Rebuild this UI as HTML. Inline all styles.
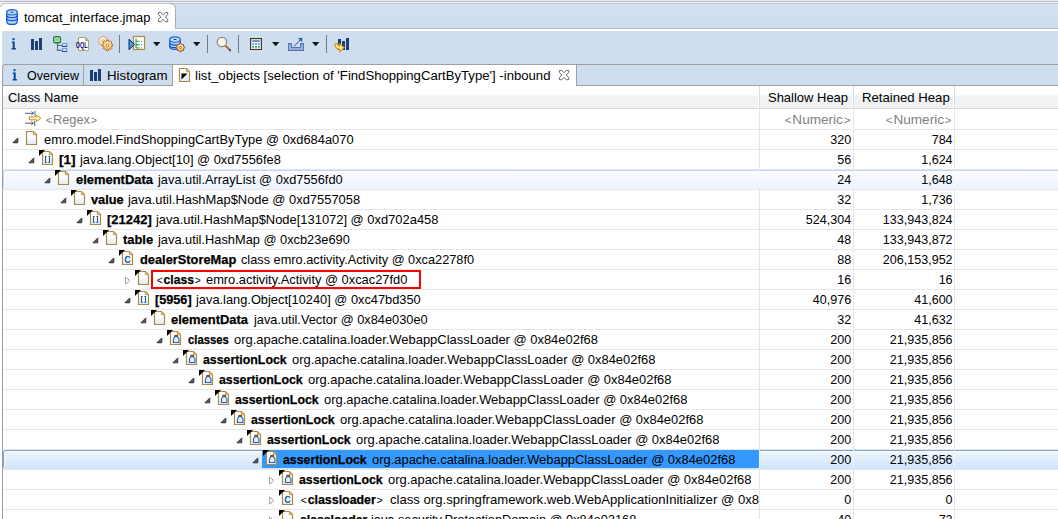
<!DOCTYPE html>
<html><head><meta charset="utf-8"><title>tomcat_interface.jmap</title>
<style>
html,body{margin:0;padding:0;background:#fff;}
body{width:1058px;height:519px;overflow:hidden;position:relative;font-family:"Liberation Sans","Noto Sans CJK SC",sans-serif;font-size:13px;color:#000;}
.abs,.ic,.t,.n{position:absolute;}
.ic{display:block;overflow:visible;}
.t{display:block;white-space:nowrap;line-height:20px;height:20px;transform-origin:0 50%;}
.t b{font-weight:bold;-webkit-text-stroke:0.25px #000;}
.n{white-space:nowrap;line-height:20px;height:20px;text-align:right;transform-origin:100% 50%;transform:scaleX(.965);}
.g{color:#808080;}
.ab{font-size:11px;padding:0 .8px;}
.hl{position:absolute;left:0;width:1058px;height:1px;background:#e6e6e6;}
.vl{position:absolute;top:110px;width:1px;height:409px;background:#e6e6e6;}
.sep{position:absolute;top:35px;width:1px;height:18px;background:#717b8b;}

</style></head><body>
<svg width="0" height="0" style="position:absolute"><defs><linearGradient id="gg" x1="0" y1="0" x2="0" y2="1"><stop offset="0" stop-color="#fff6b8"/><stop offset="1" stop-color="#f5bd55"/></linearGradient><linearGradient id="gp" x1="0" y1="0" x2="0" y2="1"><stop offset="0" stop-color="#fffbe0"/><stop offset="1" stop-color="#f8dca0"/></linearGradient><linearGradient id="pg" x1="0" y1="0" x2="0" y2="1"><stop offset="0" stop-color="#ffffff"/><stop offset="0.45" stop-color="#fbfcff"/><stop offset="1" stop-color="#dfe6f8"/></linearGradient></defs></svg>

<div class="abs" style="left:0;top:0;width:1058px;height:1px;background:#e3e7f5"></div>
<div class="abs" style="left:0;top:1px;width:1058px;height:1px;background:#b8bbce"></div>
<div class="abs" style="left:0;top:2px;width:1058px;height:1px;background:#f1f1f2"></div>
<div class="abs" style="left:0;top:3px;width:1058px;height:1px;background:#c8c8c8"></div>
<div class="abs" style="left:0;top:4px;width:1058px;height:24px;background:linear-gradient(#d2e1f1,#cddded)"></div>
<div class="abs" style="left:0;top:28px;width:1058px;height:1px;background:#b0b5c9"></div>
<svg class="ic" style="left:0;top:3px" width="180" height="28" viewBox="0 0 180 28"><path d="M0 0 H5 V4 H0 Z" fill="#dde7f4"/><path d="M0 4 L4 0.5 H170 C173.5 0.5 175.5 2.5 175.5 7 V26 H180 V28 H0 Z" fill="#fff"/><path d="M0 4 L4 0.5" fill="none" stroke="#c0c0c0" stroke-width="1"/><path d="M4 0.5 H170" fill="none" stroke="#c8c8c8" stroke-width="1"/><path d="M170 0.5 C173.5 0.5 175.5 2.5 175.5 7 V25.5" fill="none" stroke="#a4adbd" stroke-width="1"/></svg>
<div class="abs" style="left:0;top:29px;width:1058px;height:2px;background:#fff"></div>
<div class="abs" style="left:2px;top:31px;width:1056px;height:33px;background:#cfdeef"></div>
<svg class="ic" style="left:6px;top:9px" width="12" height="16" viewBox="0 0 12 16"><path d="M0.7 3.2 V12.4 C0.7 16.4 11.3 16.4 11.3 12.4 V3.2 Z" fill="#a9d6ee" stroke="#1a4fd6" stroke-width="1.2"/><path d="M0.7 6.2 C0.7 9.4 11.3 9.4 11.3 6.2 M0.7 9.3 C0.7 12.5 11.3 12.5 11.3 9.3" fill="none" stroke="#1a4fd6" stroke-width="1.25"/><ellipse cx="6" cy="3.3" rx="5.3" ry="2.7" fill="#b6dcf0" stroke="#2a63dc" stroke-width="1.1"/><rect x="4.6" y="2.7" width="2.8" height="1" fill="#173a8c"/></svg>
<span class="t " style="left:23.90px;top:8px;transform:scaleX(0.9883);">tomcat_interface.jmap</span>
<svg class="ic" style="left:158px;top:12px" width="10.2" height="10.2" viewBox="0 0 11 11"><path d="M0.5 0.5 H3 L5.5 3 L8 0.5 H10.5 V2.6 L8 5.5 L10.5 8.4 V10.5 H8 L5.5 8 L3 10.5 H0.5 V8.4 L3 5.5 L0.5 2.6 Z" fill="#fff" stroke="#5c5c5c" stroke-width="1" stroke-linejoin="round"/></svg>
<svg class="ic" style="left:10.7px;top:37.8px" width="6" height="12" viewBox="0 0 6 12"><rect x="1.3" y="0" width="2.4" height="2.3" rx="1" fill="#0d55a8"/><path d="M0.8 3.6 H3.7 V10 H4.9 V11.5 H0.6 V10 H1.7 V5 H0.8 Z" fill="#07479a"/></svg>
<svg class="ic" style="left:31px;top:38px" width="12" height="12" viewBox="0 0 12 12"><rect x="0" y="1" width="3" height="11" fill="#1c3f73"/><rect x="4" y="3" width="3" height="9" fill="#1c3f73"/><rect x="8" y="0" width="3" height="12" fill="#1c3f73"/></svg>
<svg class="ic" style="left:53px;top:35px" width="16" height="18" viewBox="0 0 16 18"><path d="M4.5 8 V15.4 H9.2 M4.5 10.5 H9.2" fill="none" stroke="#5f697b" stroke-width="1.1"/><rect x="0.7" y="1.7" width="6.8" height="6" rx="1.5" fill="#92cd82" stroke="#1d7a49" stroke-width="1.35"/><rect x="1.9" y="2.9" width="4.4" height="3.6" fill="none" stroke="#d8f0c8" stroke-width="0.6"/><rect x="9.5" y="8.6" width="4.2" height="2.8" fill="#c9f0ff" stroke="#4f94c4" stroke-width="0.9"/><rect x="9.05" y="10.9" width="5.1" height="1" fill="#2a3cb2"/><rect x="9.5" y="13.7" width="4.2" height="2.8" fill="#c9f0ff" stroke="#4f94c4" stroke-width="0.9"/><rect x="9.05" y="16" width="5.1" height="1" fill="#2a3cb2"/></svg>
<svg class="ic" style="left:75px;top:36px" width="16" height="16" viewBox="0 0 16 16"><path d="M3.5 1.5 H10.5 L13.5 4.5 V14.5 H3.5 Z" fill="#fff" stroke="#b9a066" stroke-width="1"/><path d="M10.5 1.5 V4.5 H13.5 Z" fill="#e2c77c" stroke="#b9a066" stroke-width="1" stroke-linejoin="round"/><text x="0.8" y="12" font-family="Liberation Sans,sans-serif" font-weight="bold" font-size="8.2" fill="#14146a" textLength="11.8" lengthAdjust="spacingAndGlyphs">OQL</text></svg>
<svg class="ic" style="left:97px;top:35px" width="18" height="18" viewBox="0 0 18 18"><path d="M9.70 5.04 L10.95 5.28 L10.95 6.72 L9.70 6.96 L9.33 7.86 L10.04 8.91 L9.01 9.94 L7.96 9.23 L7.06 9.60 L6.82 10.85 L5.38 10.85 L5.14 9.60 L4.24 9.23 L3.19 9.94 L2.16 8.91 L2.87 7.86 L2.50 6.96 L1.25 6.72 L1.25 5.28 L2.50 5.04 L2.87 4.14 L2.16 3.09 L3.19 2.06 L4.24 2.77 L5.14 2.40 L5.38 1.15 L6.82 1.15 L7.06 2.40 L7.96 2.77 L9.01 2.06 L10.04 3.09 L9.33 4.14 Z" fill="url(#gp)" stroke="#d7a882" stroke-width="0.95" stroke-linejoin="round"/><circle cx="6.10" cy="6.00" r="1.18" fill="#fff" stroke="#d7a882" stroke-width="0.85"/><path d="M14.43 9.25 L15.79 9.51 L15.79 11.09 L14.43 11.35 L14.02 12.33 L14.80 13.48 L13.68 14.60 L12.53 13.82 L11.55 14.23 L11.29 15.59 L9.71 15.59 L9.45 14.23 L8.47 13.82 L7.32 14.60 L6.20 13.48 L6.98 12.33 L6.57 11.35 L5.21 11.09 L5.21 9.51 L6.57 9.25 L6.98 8.27 L6.20 7.12 L7.32 6.00 L8.47 6.78 L9.45 6.37 L9.71 5.01 L11.29 5.01 L11.55 6.37 L12.53 6.78 L13.68 6.00 L14.80 7.12 L14.02 8.27 Z" fill="url(#gg)" stroke="#a8602e" stroke-width="0.95" stroke-linejoin="round"/><circle cx="10.50" cy="10.30" r="1.28" fill="#fff" stroke="#a8602e" stroke-width="0.85"/></svg>
<div class="sep" style="left:119px"></div>
<svg class="ic" style="left:128px;top:35px" width="18" height="16" viewBox="0 0 18 16"><rect x="5.5" y="1.5" width="11" height="13" fill="#fff" stroke="#af8c40" stroke-width="1.2"/><path d="M8 3.5 V13 M8 6.2 H11.5 M8 9.6 H11.5 M8 13 H11.5" fill="none" stroke="#2f9252" stroke-width="1.1"/><path d="M13 6.2 h1 M13 9.6 h1 M13 13 h1" stroke="#2f9252" stroke-width="1.1"/><path d="M1 4.2 L6.6 9.4 L1 14.6 Z" fill="#49a0c6" stroke="#0b1f80" stroke-width="1" stroke-linejoin="round"/></svg>
<svg class="ic" style="left:152.8px;top:42px" width="8" height="5" viewBox="0 0 8 5"><path d="M0 0 H7.4 L3.7 4.2 Z" fill="#151515"/></svg>
<svg class="ic" style="left:168px;top:35px" width="18" height="18" viewBox="0 0 18 18"><path d="M1.7 4.6 V11.6 C1.7 15.4 12.3 15.4 12.3 11.6 V4.6 Z" fill="#a9d6ee" stroke="#1a4fd6" stroke-width="1.15"/><path d="M1.7 7.8 C1.7 10.8 12.3 10.8 12.3 7.8 M1.7 10.4 C1.7 13.4 12.3 13.4 12.3 10.4" fill="none" stroke="#1a4fd6" stroke-width="1.15"/><ellipse cx="7" cy="4.6" rx="5.3" ry="2.7" fill="#b9dff2" stroke="#2a63dc" stroke-width="1.1"/><rect x="5.6" y="4" width="2.8" height="1" fill="#173a8c"/><path d="M15.56 11.65 L16.65 11.86 L16.65 13.14 L15.56 13.35 L15.23 14.13 L15.86 15.06 L14.96 15.96 L14.03 15.33 L13.25 15.66 L13.04 16.75 L11.76 16.75 L11.55 15.66 L10.77 15.33 L9.84 15.96 L8.94 15.06 L9.57 14.13 L9.24 13.35 L8.15 13.14 L8.15 11.86 L9.24 11.65 L9.57 10.87 L8.94 9.94 L9.84 9.04 L10.77 9.67 L11.55 9.34 L11.76 8.25 L13.04 8.25 L13.25 9.34 L14.03 9.67 L14.96 9.04 L15.86 9.94 L15.23 10.87 Z" fill="url(#gg)" stroke="#9a5628" stroke-width="0.95" stroke-linejoin="round"/><circle cx="12.40" cy="12.50" r="1.03" fill="#fff" stroke="#9a5628" stroke-width="0.85"/></svg>
<svg class="ic" style="left:192.8px;top:42px" width="8" height="5" viewBox="0 0 8 5"><path d="M0 0 H7.4 L3.7 4.2 Z" fill="#151515"/></svg>
<div class="sep" style="left:207px"></div>
<svg class="ic" style="left:216px;top:36px" width="17" height="17" viewBox="0 0 17 17"><path d="M9.6 9.8 L14 14.2" stroke="#c4602c" stroke-width="1.9" stroke-linecap="round"/><path d="M13.7 13.9 L14.3 14.5" stroke="#2a3a8c" stroke-width="1.7" stroke-linecap="round"/><circle cx="5.9" cy="6" r="4.6" fill="#fffbe6" stroke="#8a8a86" stroke-width="1.3"/></svg>
<div class="sep" style="left:238px"></div>
<svg class="ic" style="left:250px;top:38px" width="12" height="12" viewBox="0 0 12 12"><rect x="0.6" y="0.6" width="10.8" height="10.8" fill="#fff" stroke="#3d3835" stroke-width="1.2"/><rect x="1.2" y="9" width="9.6" height="1.8" fill="#eeeac0"/><rect x="2.2" y="2.2" width="7.6" height="1.6" fill="#3b86ae"/><g fill="#3b86ae"><rect x="2.2" y="5.2" width="1.8" height="1.6"/><rect x="5.1" y="5.2" width="1.8" height="1.6"/><rect x="8" y="5.2" width="1.8" height="1.6"/><rect x="2.2" y="8" width="1.8" height="1.6"/><rect x="5.1" y="8" width="1.8" height="1.6"/><rect x="8" y="8" width="1.8" height="1.6"/></g></svg>
<svg class="ic" style="left:271.8px;top:42px" width="8" height="5" viewBox="0 0 8 5"><path d="M0 0 H7.4 L3.7 4.2 Z" fill="#151515"/></svg>
<svg class="ic" style="left:288px;top:37px" width="17" height="15" viewBox="0 0 17 15"><path d="M0.6 6.6 H3.4 V10.6 H12.6 V6.6 H15.4 V13.4 H0.6 Z" fill="#a9bfe4" stroke="#5473b0" stroke-width="1.1"/><path d="M6.2 9.2 L13 2.2" stroke="#2a3fa6" stroke-width="1" fill="none"/><path d="M10 1 H14.2 V5.2 Z" fill="#1d5aa6"/></svg>
<svg class="ic" style="left:311.8px;top:42px" width="8" height="5" viewBox="0 0 8 5"><path d="M0 0 H7.4 L3.7 4.2 Z" fill="#151515"/></svg>
<div class="sep" style="left:326px"></div>
<svg class="ic" style="left:334px;top:38px" width="16" height="15" viewBox="0 0 16 15"><rect x="4" y="1" width="3" height="11" fill="#1c3f73"/><rect x="8" y="3" width="3" height="9" fill="#1c3f73"/><rect x="12" y="0" width="3" height="12" fill="#1c3f73"/><path d="M1 5.8 C0.8 9.6 2.6 11.2 5.6 11.2 V13.8 L10.2 9.6 L5.6 5.8 V7.8 C4.4 7.8 3.8 7.2 3.8 5.8 Z" fill="#ffe88c" stroke="#d2920e" stroke-width="1.1" stroke-linejoin="round"/></svg>
<div class="abs" style="left:3px;top:65px;width:1055px;height:20px;background:#cedeee"></div>
<div class="abs" style="left:2px;top:85px;width:1056px;height:1px;background:#a0a0a0"></div>
<div class="abs" style="left:2px;top:64px;width:1060px;height:460px;box-sizing:border-box;border-left:1px solid #a0a0a0;border-top:1px solid #a0a0a0;border-top-left-radius:3px"></div>
<div class="abs" style="left:83px;top:65px;width:1px;height:20px;background:#a0a0a0"></div>
<div class="abs" style="left:172px;top:65px;width:405px;height:21px;background:#fff;border-left:1px solid #a0a0a0;border-right:1px solid #a0a0a0;box-sizing:border-box"></div>
<svg class="ic" style="left:11.7px;top:68.6px" width="6" height="12" viewBox="0 0 6 12"><rect x="1.3" y="0" width="2.4" height="2.3" rx="1" fill="#0d55a8"/><path d="M0.8 3.6 H3.7 V10 H4.9 V11.5 H0.6 V10 H1.7 V5 H0.8 Z" fill="#07479a"/></svg>
<span class="t " style="left:26.50px;top:66px;transform:scaleX(0.9611);">Overview</span>
<svg class="ic" style="left:90px;top:69px" width="12" height="12" viewBox="0 0 12 12"><rect x="0" y="1" width="3" height="11" fill="#1c3f73"/><rect x="4" y="3" width="3" height="9" fill="#1c3f73"/><rect x="8" y="0" width="3" height="12" fill="#1c3f73"/></svg>
<span class="t " style="left:106.98px;top:66px;transform:scaleX(1.0224);">Histogram</span>
<svg class="ic" style="left:176px;top:67px" width="16" height="16" viewBox="0 0 16 16"><path d="M3.5 1.5 H10.5 L13.5 4.5 V14.5 H3.5 Z" fill="url(#pg)" stroke="#a98a3e" stroke-width="1.15"/><path d="M10.3 1.7 V4.7 H13.3 Z" fill="#e6cd86" stroke="#b8984a" stroke-width="0.8" stroke-linejoin="round"/><path d="M5.5 6.5 H11.5 L5.5 12.5 Z" fill="#000"/></svg>
<span class="t " style="left:195.39px;top:66px;transform:scaleX(1.0103);">list_objects [selection of 'FindShoppingCartByType'] -inbound</span>
<svg class="ic" style="left:559px;top:70px" width="10.2" height="10.2" viewBox="0 0 11 11"><path d="M0.5 0.5 H3 L5.5 3 L8 0.5 H10.5 V2.6 L8 5.5 L10.5 8.4 V10.5 H8 L5.5 8 L3 10.5 H0.5 V8.4 L3 5.5 L0.5 2.6 Z" fill="#fff" stroke="#5c5c5c" stroke-width="1" stroke-linejoin="round"/></svg>
<div class="abs" style="left:3px;top:86px;width:1055px;height:22px;background:linear-gradient(#fff 0,#fff 9px,#f1f2f4 10px,#f1f2f4 100%)"></div>
<div class="abs" style="left:3px;top:108px;width:1055px;height:1px;background:#d5d5d5"></div>
<div class="abs" style="left:759px;top:86px;width:1px;height:22px;background:#dcdde0"></div>
<div class="abs" style="left:758px;top:86px;width:1px;height:22px;background:#fff"></div>
<div class="abs" style="left:853px;top:86px;width:1px;height:22px;background:#dcdde0"></div>
<div class="abs" style="left:852px;top:86px;width:1px;height:22px;background:#fff"></div>
<div class="abs" style="left:954px;top:86px;width:1px;height:22px;background:#dcdde0"></div>
<div class="abs" style="left:953px;top:86px;width:1px;height:22px;background:#fff"></div>
<span class="t " style="left:8.11px;top:88px;transform:scaleX(0.9942);">Class Name</span>
<span class="t " style="left:768.00px;top:88px;transform:scaleX(0.9975);">Shallow Heap</span>
<span class="t " style="left:861.89px;top:88px;transform:scaleX(1.0118);">Retained Heap</span>
<div class="hl" style="top:129px;left:3px"></div>
<div class="hl" style="top:149px;left:3px"></div>
<div class="hl" style="top:169px;left:3px"></div>
<div class="hl" style="top:189px;left:3px"></div>
<div class="hl" style="top:209px;left:3px"></div>
<div class="hl" style="top:229px;left:3px"></div>
<div class="hl" style="top:249px;left:3px"></div>
<div class="hl" style="top:269px;left:3px"></div>
<div class="hl" style="top:289px;left:3px"></div>
<div class="hl" style="top:309px;left:3px"></div>
<div class="hl" style="top:329px;left:3px"></div>
<div class="hl" style="top:349px;left:3px"></div>
<div class="hl" style="top:369px;left:3px"></div>
<div class="hl" style="top:389px;left:3px"></div>
<div class="hl" style="top:409px;left:3px"></div>
<div class="hl" style="top:429px;left:3px"></div>
<div class="hl" style="top:449px;left:3px"></div>
<div class="hl" style="top:469px;left:3px"></div>
<div class="hl" style="top:489px;left:3px"></div>
<div class="hl" style="top:509px;left:3px"></div>
<div class="hl" style="top:529px;left:3px"></div>
<div class="abs" style="left:3px;top:170px;width:1057px;height:19px;box-sizing:border-box;border:1px solid #b8d6fb;border-bottom:0;border-radius:3px 0 0 3px;background:linear-gradient(#fdfeff,#ebf3fd);box-shadow:inset 1px 1px 0 rgba(255,255,255,.75)"></div>
<div class="abs" style="left:3px;top:450px;width:1057px;height:19px;box-sizing:border-box;border:1px solid #7da2ce;border-bottom:0;border-radius:3px 0 0 3px;background:linear-gradient(#eff6fe,#cfe3fc);box-shadow:inset 1px 1px 0 rgba(255,255,255,.75)"></div>
<div class="vl" style="left:759px"></div>
<div class="vl" style="left:853px"></div>
<div class="vl" style="left:954px"></div>
<div class="abs" style="left:759px;top:171px;width:1px;height:17px;background:#f4f8fe"></div>
<div class="abs" style="left:759px;top:451px;width:1px;height:17px;background:#eef5fe"></div>
<div class="abs" style="left:853px;top:171px;width:1px;height:17px;background:#f4f8fe"></div>
<div class="abs" style="left:853px;top:451px;width:1px;height:17px;background:#eef5fe"></div>
<div class="abs" style="left:954px;top:171px;width:1px;height:17px;background:#f4f8fe"></div>
<div class="abs" style="left:954px;top:451px;width:1px;height:17px;background:#eef5fe"></div>
<svg class="ic" style="left:24px;top:110px" width="18" height="18" viewBox="0 0 18 18"><path d="M1 3.3 H9.6 M7.4 1.5 L9.6 3.3 L7.4 5.1 M11 0.9 V5.7" fill="none" stroke="#4a6482" stroke-width="1"/><path d="M1 13.2 H9.4 M7.2 11.4 L9.4 13.2 L7.2 15 M10.7 10.8 V16" fill="none" stroke="#4a6482" stroke-width="1"/><path d="M5.4 6.9 H12.6 V5.1 L16.9 8.3 L12.6 11.6 V9.8 H5.4 Z" fill="#fff6cc" stroke="#c78d1a" stroke-width="1" stroke-linejoin="round"/></svg>
<span class="t g" style="left:44.71px;top:110px;transform:scaleX(0.9865);"><span class="ab">&lt;</span>Regex<span class="ab">&gt;</span></span>
<span class="t g" style="left:783.76px;top:110px;transform:scaleX(1.0419);"><span class="ab">&lt;</span>Numeric<span class="ab">&gt;</span></span>
<span class="t g" style="left:884.95px;top:110px;transform:scaleX(1.0452);"><span class="ab">&lt;</span>Numeric<span class="ab">&gt;</span></span>
<svg class="ic" style="left:11.7px;top:136.6px" width="7" height="7" viewBox="0 0 7 7"><path d="M5.8 0.9 V5.8 H0.9 Z" fill="#555" stroke="#2e2e2e" stroke-width="0.9" stroke-linejoin="round"/></svg>
<svg class="ic" style="left:23px;top:130px" width="16" height="16" viewBox="0 0 16 16"><path d="M3.5 1.5 H10.5 L13.5 4.5 V14.5 H3.5 Z" fill="url(#pg)" stroke="#a98a3e" stroke-width="1.15"/><path d="M10.3 1.7 V4.7 H13.3 Z" fill="#e6cd86" stroke="#b8984a" stroke-width="0.8" stroke-linejoin="round"/></svg>
<span class="t " style="left:43.50px;top:130px;transform:scaleX(0.9910);">emro.model.FindShoppingCartByType @ 0xd684a070</span>
<div class="n" style="left:760px;width:91.2px;top:130px">320</div>
<div class="n" style="left:854px;width:98.6px;top:130px">784</div>
<svg class="ic" style="left:27.7px;top:156.6px" width="7" height="7" viewBox="0 0 7 7"><path d="M5.8 0.9 V5.8 H0.9 Z" fill="#555" stroke="#2e2e2e" stroke-width="0.9" stroke-linejoin="round"/></svg>
<svg class="ic" style="left:39px;top:150px" width="16" height="16" viewBox="0 0 16 16"><path d="M3.5 1.5 H10.5 L13.5 4.5 V14.5 H3.5 Z" fill="url(#pg)" stroke="#a98a3e" stroke-width="1.15"/><path d="M10.3 1.7 V4.7 H13.3 Z" fill="#e6cd86" stroke="#b8984a" stroke-width="0.8" stroke-linejoin="round"/><path d="M7.6 6.5 H6.5 V12.5 H7.6 M9.4 6.5 H10.5 V12.5 H9.4" fill="none" stroke="#1f5c9e" stroke-width="1.1"/><path d="M0 0 H6 L0 6 Z" fill="#000"/></svg>
<span class="t " style="left:59.46px;top:150px;transform:scaleX(1.0429);"><b>[1]</b></span>
<span class="t " style="left:80.10px;top:150px;transform:scaleX(0.9877);">java.lang.Object[10] @ 0xd7556fe8</span>
<div class="n" style="left:760px;width:91.2px;top:150px">56</div>
<div class="n" style="left:854px;width:98.6px;top:150px">1,624</div>
<svg class="ic" style="left:43.7px;top:176.6px" width="7" height="7" viewBox="0 0 7 7"><path d="M5.8 0.9 V5.8 H0.9 Z" fill="#555" stroke="#2e2e2e" stroke-width="0.9" stroke-linejoin="round"/></svg>
<svg class="ic" style="left:55px;top:170px" width="16" height="16" viewBox="0 0 16 16"><path d="M3.5 1.5 H10.5 L13.5 4.5 V14.5 H3.5 Z" fill="url(#pg)" stroke="#a98a3e" stroke-width="1.15"/><path d="M10.3 1.7 V4.7 H13.3 Z" fill="#e6cd86" stroke="#b8984a" stroke-width="0.8" stroke-linejoin="round"/><path d="M0 0 H6 L0 6 Z" fill="#000"/></svg>
<span class="t " style="left:75.60px;top:170px;transform:scaleX(0.9949);"><b>elementData</b></span>
<span class="t " style="left:157.70px;top:170px;transform:scaleX(0.9856);">java.util.ArrayList @ 0xd7556fd0</span>
<div class="n" style="left:760px;width:91.2px;top:170px">24</div>
<div class="n" style="left:854px;width:98.6px;top:170px">1,648</div>
<svg class="ic" style="left:59.7px;top:196.6px" width="7" height="7" viewBox="0 0 7 7"><path d="M5.8 0.9 V5.8 H0.9 Z" fill="#555" stroke="#2e2e2e" stroke-width="0.9" stroke-linejoin="round"/></svg>
<svg class="ic" style="left:71px;top:190px" width="16" height="16" viewBox="0 0 16 16"><path d="M3.5 1.5 H10.5 L13.5 4.5 V14.5 H3.5 Z" fill="url(#pg)" stroke="#a98a3e" stroke-width="1.15"/><path d="M10.3 1.7 V4.7 H13.3 Z" fill="#e6cd86" stroke="#b8984a" stroke-width="0.8" stroke-linejoin="round"/><path d="M0 0 H6 L0 6 Z" fill="#000"/></svg>
<span class="t " style="left:91.40px;top:190px;transform:scaleX(0.9848);"><b>value</b></span>
<span class="t " style="left:128.20px;top:190px;transform:scaleX(0.9936);">java.util.HashMap$Node @ 0xd7557058</span>
<div class="n" style="left:760px;width:91.2px;top:190px">32</div>
<div class="n" style="left:854px;width:98.6px;top:190px">1,736</div>
<svg class="ic" style="left:75.7px;top:216.6px" width="7" height="7" viewBox="0 0 7 7"><path d="M5.8 0.9 V5.8 H0.9 Z" fill="#555" stroke="#2e2e2e" stroke-width="0.9" stroke-linejoin="round"/></svg>
<svg class="ic" style="left:87px;top:210px" width="16" height="16" viewBox="0 0 16 16"><path d="M3.5 1.5 H10.5 L13.5 4.5 V14.5 H3.5 Z" fill="url(#pg)" stroke="#a98a3e" stroke-width="1.15"/><path d="M10.3 1.7 V4.7 H13.3 Z" fill="#e6cd86" stroke="#b8984a" stroke-width="0.8" stroke-linejoin="round"/><path d="M7.6 6.5 H6.5 V12.5 H7.6 M9.4 6.5 H10.5 V12.5 H9.4" fill="none" stroke="#1f5c9e" stroke-width="1.1"/><path d="M0 0 H6 L0 6 Z" fill="#000"/></svg>
<span class="t " style="left:107.10px;top:210px;transform:scaleX(0.9977);"><b>[21242]</b></span>
<span class="t " style="left:155.70px;top:210px;transform:scaleX(0.9937);">java.util.HashMap$Node[131072] @ 0xd702a458</span>
<div class="n" style="left:760px;width:91.2px;top:210px">524,304</div>
<div class="n" style="left:854px;width:98.6px;top:210px">133,943,824</div>
<svg class="ic" style="left:91.7px;top:236.6px" width="7" height="7" viewBox="0 0 7 7"><path d="M5.8 0.9 V5.8 H0.9 Z" fill="#555" stroke="#2e2e2e" stroke-width="0.9" stroke-linejoin="round"/></svg>
<svg class="ic" style="left:103px;top:230px" width="16" height="16" viewBox="0 0 16 16"><path d="M3.5 1.5 H10.5 L13.5 4.5 V14.5 H3.5 Z" fill="url(#pg)" stroke="#a98a3e" stroke-width="1.15"/><path d="M10.3 1.7 V4.7 H13.3 Z" fill="#e6cd86" stroke="#b8984a" stroke-width="0.8" stroke-linejoin="round"/><path d="M0 0 H6 L0 6 Z" fill="#000"/></svg>
<span class="t " style="left:123.40px;top:230px;transform:scaleX(0.9933);"><b>table</b></span>
<span class="t " style="left:157.70px;top:230px;transform:scaleX(0.9861);">java.util.HashMap @ 0xcb23e690</span>
<div class="n" style="left:760px;width:91.2px;top:230px">48</div>
<div class="n" style="left:854px;width:98.6px;top:230px">133,943,872</div>
<svg class="ic" style="left:107.7px;top:256.6px" width="7" height="7" viewBox="0 0 7 7"><path d="M5.8 0.9 V5.8 H0.9 Z" fill="#555" stroke="#2e2e2e" stroke-width="0.9" stroke-linejoin="round"/></svg>
<svg class="ic" style="left:119px;top:250px" width="16" height="16" viewBox="0 0 16 16"><path d="M3.5 1.5 H10.5 L13.5 4.5 V14.5 H3.5 Z" fill="url(#pg)" stroke="#a98a3e" stroke-width="1.15"/><path d="M10.3 1.7 V4.7 H13.3 Z" fill="#e6cd86" stroke="#b8984a" stroke-width="0.8" stroke-linejoin="round"/><path d="M11 7.9 C10 5.8 6.4 5.8 6.4 9.4 C6.4 13 10 13 11 10.9" fill="none" stroke="#1f5c9e" stroke-width="1.3"/><path d="M0 0 H6 L0 6 Z" fill="#000"/></svg>
<span class="t " style="left:139.50px;top:250px;transform:scaleX(0.9866);"><b>dealerStoreMap</b></span>
<span class="t " style="left:240.70px;top:250px;transform:scaleX(0.9806);">class emro.activity.Activity @ 0xca2278f0</span>
<div class="n" style="left:760px;width:91.2px;top:250px">88</div>
<div class="n" style="left:854px;width:98.6px;top:250px">206,153,952</div>
<svg class="ic" style="left:125px;top:274px" width="7" height="12" viewBox="0 0 7 12"><path d="M0.6 3 L4.9 6.6 L0.6 10.2 Z" fill="#fff" stroke="#a0a0a0" stroke-width="1"/></svg>
<svg class="ic" style="left:135px;top:270px" width="16" height="16" viewBox="0 0 16 16"><path d="M3.5 1.5 H10.5 L13.5 4.5 V14.5 H3.5 Z" fill="url(#pg)" stroke="#a98a3e" stroke-width="1.15"/><path d="M10.3 1.7 V4.7 H13.3 Z" fill="#e6cd86" stroke="#b8984a" stroke-width="0.8" stroke-linejoin="round"/><path d="M0 0 H6 L0 6 Z" fill="#000"/></svg>
<span class="t " style="left:156.07px;top:270px;transform:scaleX(0.9340);"><span class="ab">&lt;</span><b>class</b><span class="ab">&gt;</span></span>
<span class="t " style="left:206.40px;top:270px;transform:scaleX(0.9882);">emro.activity.Activity @ 0xcac27fd0</span>
<div class="n" style="left:760px;width:91.2px;top:270px">16</div>
<div class="n" style="left:854px;width:98.6px;top:270px">16</div>
<svg class="ic" style="left:123.7px;top:296.6px" width="7" height="7" viewBox="0 0 7 7"><path d="M5.8 0.9 V5.8 H0.9 Z" fill="#555" stroke="#2e2e2e" stroke-width="0.9" stroke-linejoin="round"/></svg>
<svg class="ic" style="left:135px;top:290px" width="16" height="16" viewBox="0 0 16 16"><path d="M3.5 1.5 H10.5 L13.5 4.5 V14.5 H3.5 Z" fill="url(#pg)" stroke="#a98a3e" stroke-width="1.15"/><path d="M10.3 1.7 V4.7 H13.3 Z" fill="#e6cd86" stroke="#b8984a" stroke-width="0.8" stroke-linejoin="round"/><path d="M7.6 6.5 H6.5 V12.5 H7.6 M9.4 6.5 H10.5 V12.5 H9.4" fill="none" stroke="#1f5c9e" stroke-width="1.1"/><path d="M0 0 H6 L0 6 Z" fill="#000"/></svg>
<span class="t " style="left:155.33px;top:290px;transform:scaleX(0.9750);"><b>[5956]</b></span>
<span class="t " style="left:196.40px;top:290px;transform:scaleX(0.9864);">java.lang.Object[10240] @ 0xc47bd350</span>
<div class="n" style="left:760px;width:91.2px;top:290px">40,976</div>
<div class="n" style="left:854px;width:98.6px;top:290px">41,600</div>
<svg class="ic" style="left:139.7px;top:316.6px" width="7" height="7" viewBox="0 0 7 7"><path d="M5.8 0.9 V5.8 H0.9 Z" fill="#555" stroke="#2e2e2e" stroke-width="0.9" stroke-linejoin="round"/></svg>
<svg class="ic" style="left:151px;top:310px" width="16" height="16" viewBox="0 0 16 16"><path d="M3.5 1.5 H10.5 L13.5 4.5 V14.5 H3.5 Z" fill="url(#pg)" stroke="#a98a3e" stroke-width="1.15"/><path d="M10.3 1.7 V4.7 H13.3 Z" fill="#e6cd86" stroke="#b8984a" stroke-width="0.8" stroke-linejoin="round"/><path d="M0 0 H6 L0 6 Z" fill="#000"/></svg>
<span class="t " style="left:171.30px;top:310px;transform:scaleX(0.9962);"><b>elementData</b></span>
<span class="t " style="left:254.00px;top:310px;transform:scaleX(0.9835);">java.util.Vector @ 0x84e030e0</span>
<div class="n" style="left:760px;width:91.2px;top:310px">32</div>
<div class="n" style="left:854px;width:98.6px;top:310px">41,632</div>
<svg class="ic" style="left:155.7px;top:336.6px" width="7" height="7" viewBox="0 0 7 7"><path d="M5.8 0.9 V5.8 H0.9 Z" fill="#555" stroke="#2e2e2e" stroke-width="0.9" stroke-linejoin="round"/></svg>
<svg class="ic" style="left:167px;top:330px" width="16" height="16" viewBox="0 0 16 16"><path d="M3.5 1.5 H10.5 L13.5 4.5 V14.5 H3.5 Z" fill="url(#pg)" stroke="#a98a3e" stroke-width="1.15"/><path d="M10.3 1.7 V4.7 H13.3 Z" fill="#e6cd86" stroke="#b8984a" stroke-width="0.8" stroke-linejoin="round"/><path d="M7.7 6.5 H10.7 V7.5 C11.4 7.8 11.9 8.3 11.9 9 V12.5 H6.5 V9 C6.5 8.3 7 7.8 7.7 7.5 Z" fill="#e2f0fc" stroke="#2a64a4" stroke-width="1.1" stroke-linejoin="round"/><rect x="7.4" y="4.9" width="3.6" height="1.5" fill="#a2380f"/><path d="M0 0 H6 L0 6 Z" fill="#000"/></svg>
<span class="t " style="left:187.60px;top:330px;transform:scaleX(0.8681);"><b>classes</b></span>
<span class="t " style="left:233.50px;top:330px;transform:scaleX(0.9951);">org.apache.catalina.loader.WebappClassLoader @ 0x84e02f68</span>
<div class="n" style="left:760px;width:91.2px;top:330px">200</div>
<div class="n" style="left:854px;width:98.6px;top:330px">21,935,856</div>
<svg class="ic" style="left:171.7px;top:356.6px" width="7" height="7" viewBox="0 0 7 7"><path d="M5.8 0.9 V5.8 H0.9 Z" fill="#555" stroke="#2e2e2e" stroke-width="0.9" stroke-linejoin="round"/></svg>
<svg class="ic" style="left:183px;top:350px" width="16" height="16" viewBox="0 0 16 16"><path d="M3.5 1.5 H10.5 L13.5 4.5 V14.5 H3.5 Z" fill="url(#pg)" stroke="#a98a3e" stroke-width="1.15"/><path d="M10.3 1.7 V4.7 H13.3 Z" fill="#e6cd86" stroke="#b8984a" stroke-width="0.8" stroke-linejoin="round"/><path d="M7.7 6.5 H10.7 V7.5 C11.4 7.8 11.9 8.3 11.9 9 V12.5 H6.5 V9 C6.5 8.3 7 7.8 7.7 7.5 Z" fill="#e2f0fc" stroke="#2a64a4" stroke-width="1.1" stroke-linejoin="round"/><rect x="7.4" y="4.9" width="3.6" height="1.5" fill="#a2380f"/><path d="M0 0 H6 L0 6 Z" fill="#000"/></svg>
<span class="t " style="left:203.10px;top:350px;transform:scaleX(0.9489);"><b>assertionLock</b></span>
<span class="t " style="left:292.10px;top:350px;transform:scaleX(0.9937);">org.apache.catalina.loader.WebappClassLoader @ 0x84e02f68</span>
<div class="n" style="left:760px;width:91.2px;top:350px">200</div>
<div class="n" style="left:854px;width:98.6px;top:350px">21,935,856</div>
<svg class="ic" style="left:187.7px;top:376.6px" width="7" height="7" viewBox="0 0 7 7"><path d="M5.8 0.9 V5.8 H0.9 Z" fill="#555" stroke="#2e2e2e" stroke-width="0.9" stroke-linejoin="round"/></svg>
<svg class="ic" style="left:199px;top:370px" width="16" height="16" viewBox="0 0 16 16"><path d="M3.5 1.5 H10.5 L13.5 4.5 V14.5 H3.5 Z" fill="url(#pg)" stroke="#a98a3e" stroke-width="1.15"/><path d="M10.3 1.7 V4.7 H13.3 Z" fill="#e6cd86" stroke="#b8984a" stroke-width="0.8" stroke-linejoin="round"/><path d="M7.7 6.5 H10.7 V7.5 C11.4 7.8 11.9 8.3 11.9 9 V12.5 H6.5 V9 C6.5 8.3 7 7.8 7.7 7.5 Z" fill="#e2f0fc" stroke="#2a64a4" stroke-width="1.1" stroke-linejoin="round"/><rect x="7.4" y="4.9" width="3.6" height="1.5" fill="#a2380f"/><path d="M0 0 H6 L0 6 Z" fill="#000"/></svg>
<span class="t " style="left:219.10px;top:370px;transform:scaleX(0.9489);"><b>assertionLock</b></span>
<span class="t " style="left:308.10px;top:370px;transform:scaleX(0.9937);">org.apache.catalina.loader.WebappClassLoader @ 0x84e02f68</span>
<div class="n" style="left:760px;width:91.2px;top:370px">200</div>
<div class="n" style="left:854px;width:98.6px;top:370px">21,935,856</div>
<svg class="ic" style="left:203.7px;top:396.6px" width="7" height="7" viewBox="0 0 7 7"><path d="M5.8 0.9 V5.8 H0.9 Z" fill="#555" stroke="#2e2e2e" stroke-width="0.9" stroke-linejoin="round"/></svg>
<svg class="ic" style="left:215px;top:390px" width="16" height="16" viewBox="0 0 16 16"><path d="M3.5 1.5 H10.5 L13.5 4.5 V14.5 H3.5 Z" fill="url(#pg)" stroke="#a98a3e" stroke-width="1.15"/><path d="M10.3 1.7 V4.7 H13.3 Z" fill="#e6cd86" stroke="#b8984a" stroke-width="0.8" stroke-linejoin="round"/><path d="M7.7 6.5 H10.7 V7.5 C11.4 7.8 11.9 8.3 11.9 9 V12.5 H6.5 V9 C6.5 8.3 7 7.8 7.7 7.5 Z" fill="#e2f0fc" stroke="#2a64a4" stroke-width="1.1" stroke-linejoin="round"/><rect x="7.4" y="4.9" width="3.6" height="1.5" fill="#a2380f"/><path d="M0 0 H6 L0 6 Z" fill="#000"/></svg>
<span class="t " style="left:235.10px;top:390px;transform:scaleX(0.9489);"><b>assertionLock</b></span>
<span class="t " style="left:324.10px;top:390px;transform:scaleX(0.9937);">org.apache.catalina.loader.WebappClassLoader @ 0x84e02f68</span>
<div class="n" style="left:760px;width:91.2px;top:390px">200</div>
<div class="n" style="left:854px;width:98.6px;top:390px">21,935,856</div>
<svg class="ic" style="left:219.7px;top:416.6px" width="7" height="7" viewBox="0 0 7 7"><path d="M5.8 0.9 V5.8 H0.9 Z" fill="#555" stroke="#2e2e2e" stroke-width="0.9" stroke-linejoin="round"/></svg>
<svg class="ic" style="left:231px;top:410px" width="16" height="16" viewBox="0 0 16 16"><path d="M3.5 1.5 H10.5 L13.5 4.5 V14.5 H3.5 Z" fill="url(#pg)" stroke="#a98a3e" stroke-width="1.15"/><path d="M10.3 1.7 V4.7 H13.3 Z" fill="#e6cd86" stroke="#b8984a" stroke-width="0.8" stroke-linejoin="round"/><path d="M7.7 6.5 H10.7 V7.5 C11.4 7.8 11.9 8.3 11.9 9 V12.5 H6.5 V9 C6.5 8.3 7 7.8 7.7 7.5 Z" fill="#e2f0fc" stroke="#2a64a4" stroke-width="1.1" stroke-linejoin="round"/><rect x="7.4" y="4.9" width="3.6" height="1.5" fill="#a2380f"/><path d="M0 0 H6 L0 6 Z" fill="#000"/></svg>
<span class="t " style="left:251.10px;top:410px;transform:scaleX(0.9489);"><b>assertionLock</b></span>
<span class="t " style="left:340.10px;top:410px;transform:scaleX(0.9937);">org.apache.catalina.loader.WebappClassLoader @ 0x84e02f68</span>
<div class="n" style="left:760px;width:91.2px;top:410px">200</div>
<div class="n" style="left:854px;width:98.6px;top:410px">21,935,856</div>
<svg class="ic" style="left:235.7px;top:436.6px" width="7" height="7" viewBox="0 0 7 7"><path d="M5.8 0.9 V5.8 H0.9 Z" fill="#555" stroke="#2e2e2e" stroke-width="0.9" stroke-linejoin="round"/></svg>
<svg class="ic" style="left:247px;top:430px" width="16" height="16" viewBox="0 0 16 16"><path d="M3.5 1.5 H10.5 L13.5 4.5 V14.5 H3.5 Z" fill="url(#pg)" stroke="#a98a3e" stroke-width="1.15"/><path d="M10.3 1.7 V4.7 H13.3 Z" fill="#e6cd86" stroke="#b8984a" stroke-width="0.8" stroke-linejoin="round"/><path d="M7.7 6.5 H10.7 V7.5 C11.4 7.8 11.9 8.3 11.9 9 V12.5 H6.5 V9 C6.5 8.3 7 7.8 7.7 7.5 Z" fill="#e2f0fc" stroke="#2a64a4" stroke-width="1.1" stroke-linejoin="round"/><rect x="7.4" y="4.9" width="3.6" height="1.5" fill="#a2380f"/><path d="M0 0 H6 L0 6 Z" fill="#000"/></svg>
<span class="t " style="left:267.10px;top:430px;transform:scaleX(0.9489);"><b>assertionLock</b></span>
<span class="t " style="left:356.10px;top:430px;transform:scaleX(0.9937);">org.apache.catalina.loader.WebappClassLoader @ 0x84e02f68</span>
<div class="n" style="left:760px;width:91.2px;top:430px">200</div>
<div class="n" style="left:854px;width:98.6px;top:430px">21,935,856</div>
<div class="abs" style="left:262px;top:450px;width:497px;height:18px;background:#3399ff"></div>
<svg class="ic" style="left:251.7px;top:456.6px" width="7" height="7" viewBox="0 0 7 7"><path d="M5.8 0.9 V5.8 H0.9 Z" fill="#555" stroke="#2e2e2e" stroke-width="0.9" stroke-linejoin="round"/></svg>
<svg class="ic" style="left:263px;top:450px" width="16" height="16" viewBox="0 0 16 16"><path d="M3.5 1.5 H10.5 L13.5 4.5 V14.5 H3.5 Z" fill="url(#pg)" stroke="#a98a3e" stroke-width="1.15"/><path d="M10.3 1.7 V4.7 H13.3 Z" fill="#e6cd86" stroke="#b8984a" stroke-width="0.8" stroke-linejoin="round"/><path d="M7.7 6.5 H10.7 V7.5 C11.4 7.8 11.9 8.3 11.9 9 V12.5 H6.5 V9 C6.5 8.3 7 7.8 7.7 7.5 Z" fill="#e2f0fc" stroke="#2a64a4" stroke-width="1.1" stroke-linejoin="round"/><rect x="7.4" y="4.9" width="3.6" height="1.5" fill="#a2380f"/><path d="M0 0 H6 L0 6 Z" fill="#000"/></svg>
<span class="t " style="left:283.10px;top:450px;transform:scaleX(0.9489);"><b>assertionLock</b></span>
<span class="t " style="left:372.10px;top:450px;transform:scaleX(0.9937);">org.apache.catalina.loader.WebappClassLoader @ 0x84e02f68</span>
<div class="n" style="left:760px;width:91.2px;top:450px">200</div>
<div class="n" style="left:854px;width:98.6px;top:450px">21,935,856</div>
<svg class="ic" style="left:269px;top:474px" width="7" height="12" viewBox="0 0 7 12"><path d="M0.6 3 L4.9 6.6 L0.6 10.2 Z" fill="#fff" stroke="#a0a0a0" stroke-width="1"/></svg>
<svg class="ic" style="left:279px;top:470px" width="16" height="16" viewBox="0 0 16 16"><path d="M3.5 1.5 H10.5 L13.5 4.5 V14.5 H3.5 Z" fill="url(#pg)" stroke="#a98a3e" stroke-width="1.15"/><path d="M10.3 1.7 V4.7 H13.3 Z" fill="#e6cd86" stroke="#b8984a" stroke-width="0.8" stroke-linejoin="round"/><path d="M7.7 6.5 H10.7 V7.5 C11.4 7.8 11.9 8.3 11.9 9 V12.5 H6.5 V9 C6.5 8.3 7 7.8 7.7 7.5 Z" fill="#e2f0fc" stroke="#2a64a4" stroke-width="1.1" stroke-linejoin="round"/><rect x="7.4" y="4.9" width="3.6" height="1.5" fill="#a2380f"/><path d="M0 0 H6 L0 6 Z" fill="#000"/></svg>
<span class="t " style="left:299.10px;top:470px;transform:scaleX(0.9489);"><b>assertionLock</b></span>
<span class="t " style="left:388.10px;top:470px;transform:scaleX(0.9937);">org.apache.catalina.loader.WebappClassLoader @ 0x84e02f68</span>
<div class="n" style="left:760px;width:91.2px;top:470px">200</div>
<div class="n" style="left:854px;width:98.6px;top:470px">21,935,856</div>
<svg class="ic" style="left:269px;top:494px" width="7" height="12" viewBox="0 0 7 12"><path d="M0.6 3 L4.9 6.6 L0.6 10.2 Z" fill="#fff" stroke="#a0a0a0" stroke-width="1"/></svg>
<svg class="ic" style="left:279px;top:490px" width="16" height="16" viewBox="0 0 16 16"><path d="M3.5 1.5 H10.5 L13.5 4.5 V14.5 H3.5 Z" fill="url(#pg)" stroke="#a98a3e" stroke-width="1.15"/><path d="M10.3 1.7 V4.7 H13.3 Z" fill="#e6cd86" stroke="#b8984a" stroke-width="0.8" stroke-linejoin="round"/><path d="M11 7.9 C10 5.8 6.4 5.8 6.4 9.4 C6.4 13 10 13 11 10.9" fill="none" stroke="#1f5c9e" stroke-width="1.3"/><path d="M0 0 H6 L0 6 Z" fill="#000"/></svg>
<span class="t " style="left:300.35px;top:490px;transform:scaleX(0.9523);"><span class="ab">&lt;</span><b>classloader</b><span class="ab">&gt;</span></span>
<div class="abs" style="left:0;top:490px;width:759px;height:20px;overflow:hidden"><span class="t " style="left:389.50px;top:0px;transform:scaleX(1.0096);">class org.springframework.web.WebApplicationInitializer @ 0x84e03108</span></div>
<div class="n" style="left:760px;width:91.2px;top:490px">0</div>
<div class="n" style="left:854px;width:98.6px;top:490px">0</div>
<svg class="ic" style="left:269px;top:514px" width="7" height="12" viewBox="0 0 7 12"><path d="M0.6 3 L4.9 6.6 L0.6 10.2 Z" fill="#fff" stroke="#a0a0a0" stroke-width="1"/></svg>
<svg class="ic" style="left:279px;top:510px" width="16" height="16" viewBox="0 0 16 16"><path d="M3.5 1.5 H10.5 L13.5 4.5 V14.5 H3.5 Z" fill="url(#pg)" stroke="#a98a3e" stroke-width="1.15"/><path d="M10.3 1.7 V4.7 H13.3 Z" fill="#e6cd86" stroke="#b8984a" stroke-width="0.8" stroke-linejoin="round"/><path d="M0 0 H6 L0 6 Z" fill="#000"/></svg>
<span class="t " style="left:299.50px;top:510px;transform:scaleX(0.9403);"><b>classloader</b></span>
<span class="t " style="left:371.40px;top:510px;transform:scaleX(0.9819);">java.security.ProtectionDomain @ 0x84e03168</span>
<div class="n" style="left:760px;width:91.2px;top:510px">40</div>
<div class="n" style="left:854px;width:98.6px;top:510px">72</div>
<div class="abs" style="left:151px;top:270px;width:270px;height:19px;box-sizing:border-box;border:2px solid #fe0000"></div>
</body></html>
